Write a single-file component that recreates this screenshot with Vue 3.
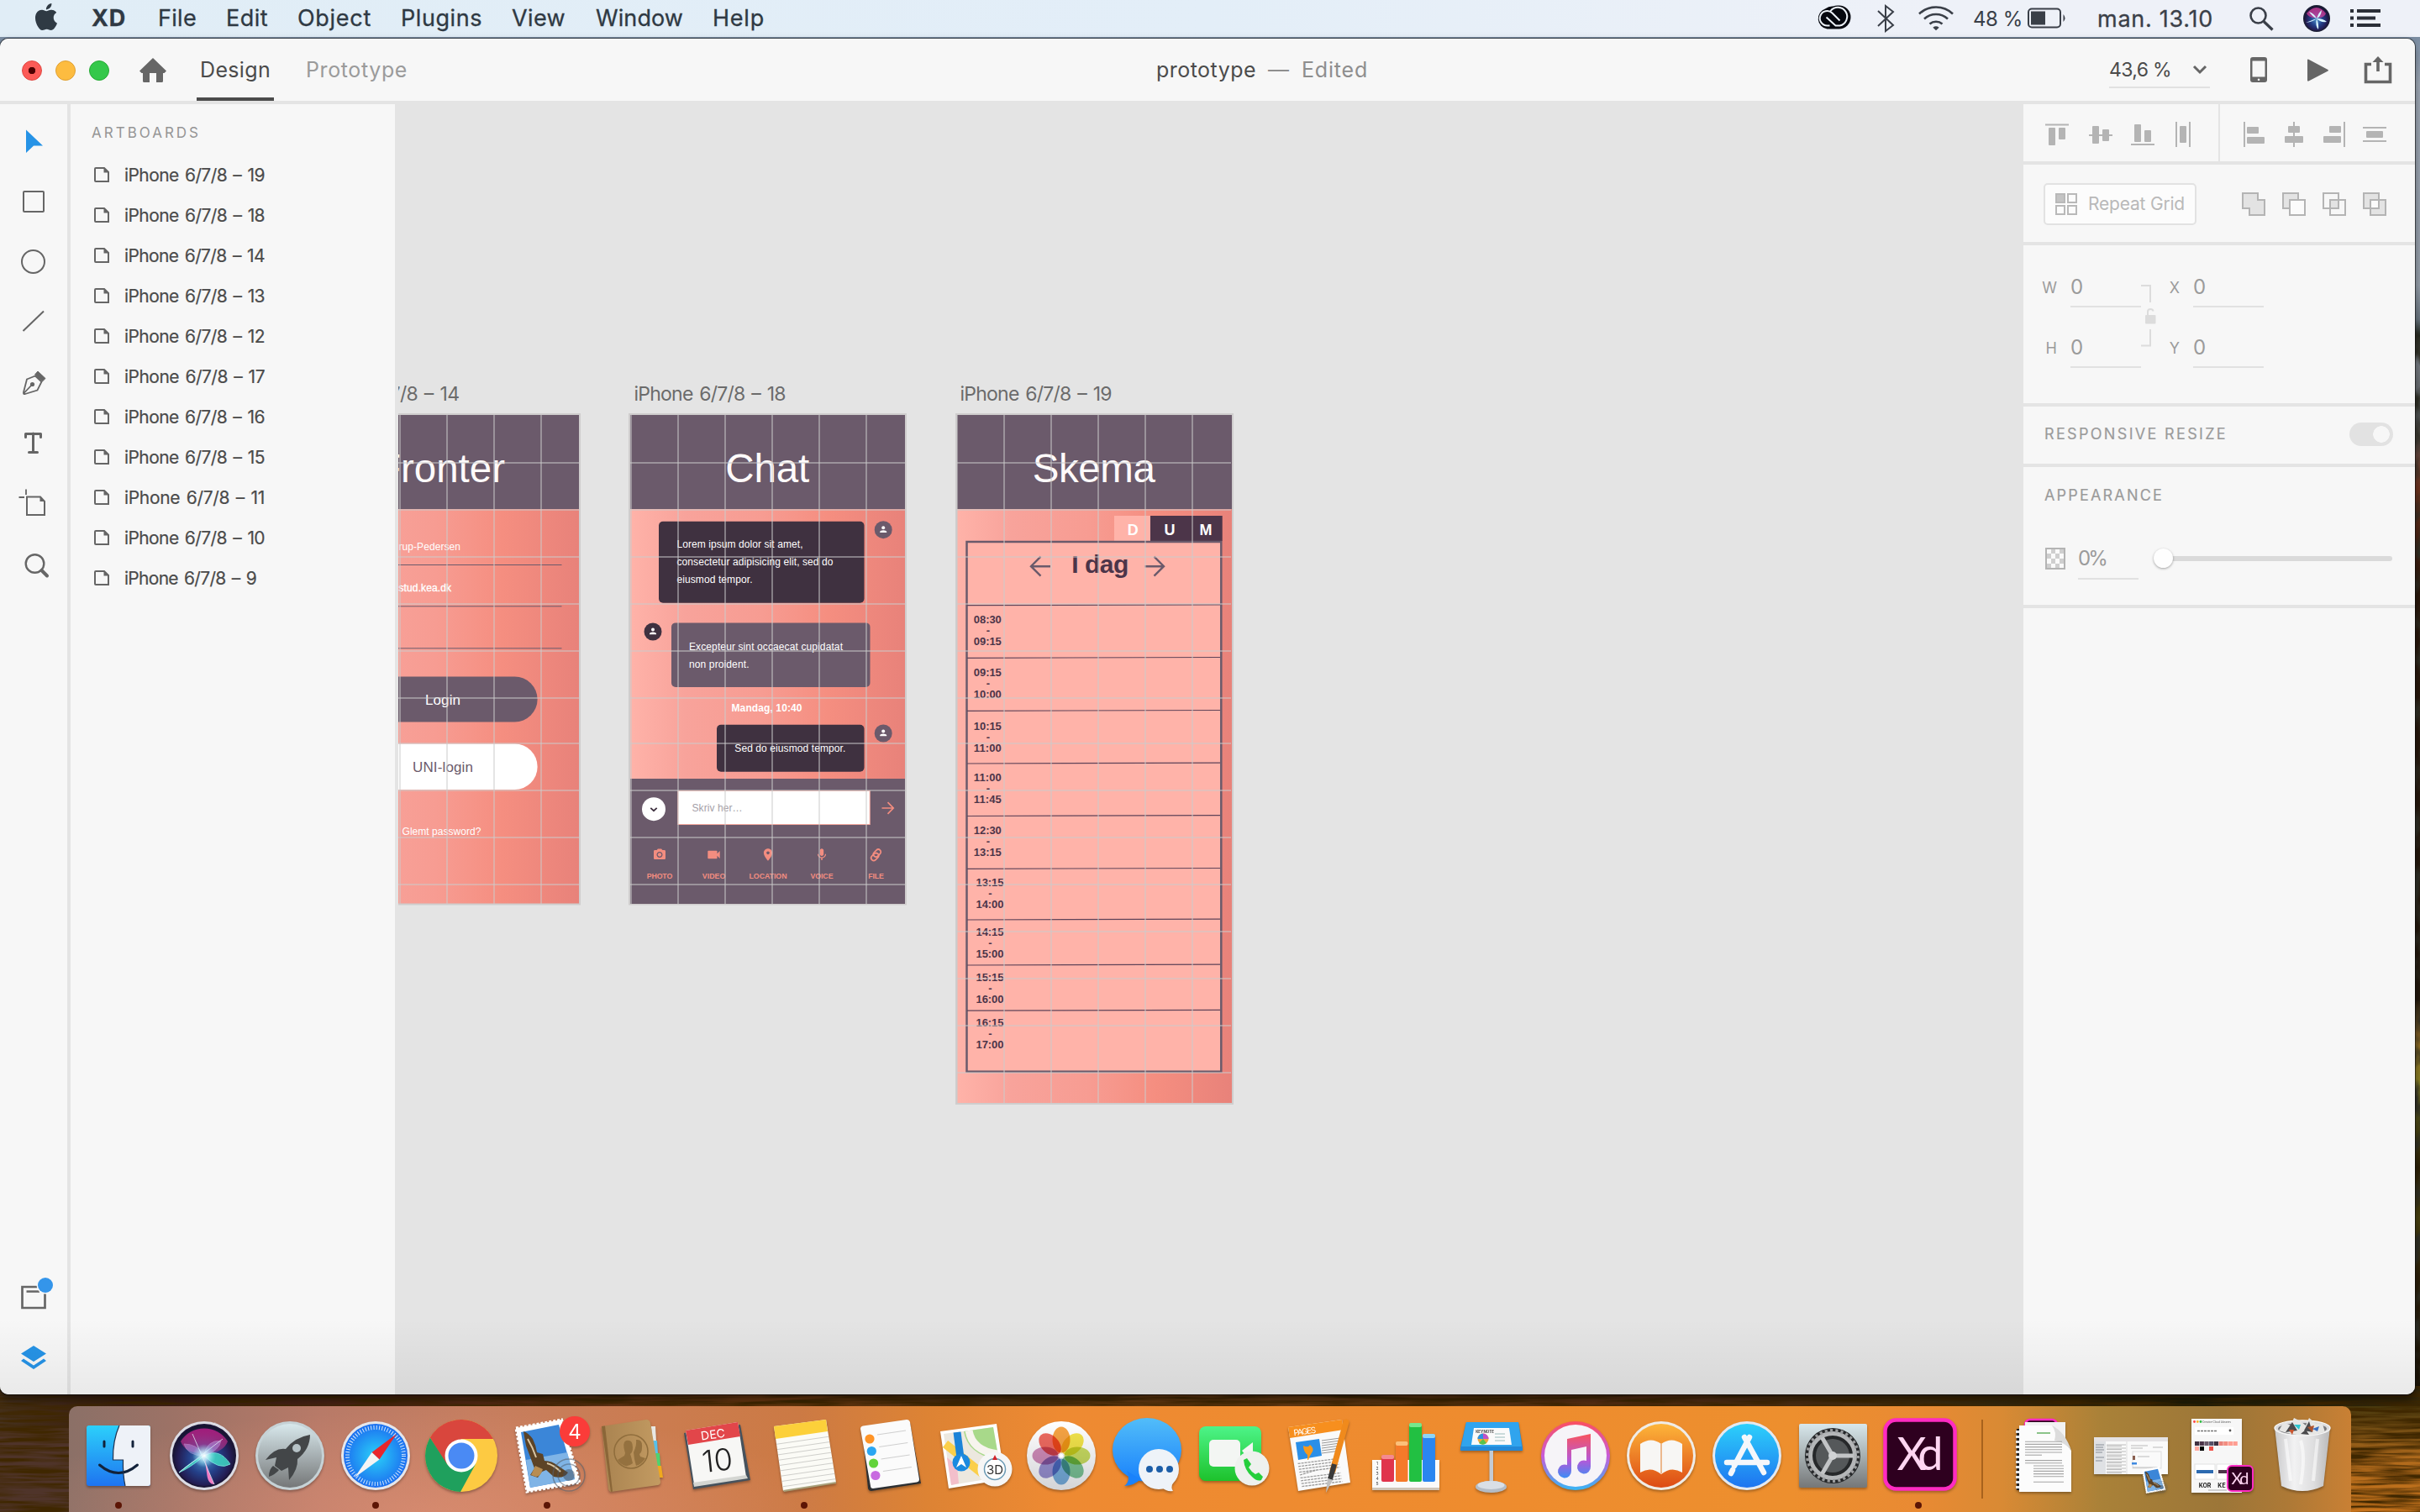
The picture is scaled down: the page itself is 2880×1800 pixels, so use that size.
<script setup>
// Adjusts tracking so a label occupies its designed width.
const vFit = {
  mounted(el, { value }) {
    const natural = el.getBoundingClientRect().width
    const count = el.textContent.length
    el.style.letterSpacing = ((value - natural) / count).toFixed(3) + 'px'
  },
}

const menus = [
  { label: 'XD', slot: 79, fit: 41, bold: true },
  { label: 'File', slot: 81, fit: 46 },
  { label: 'Edit', slot: 85, fit: 50 },
  { label: 'Object', slot: 123, fit: 88 },
  { label: 'Plugins', slot: 132, fit: 97 },
  { label: 'View', slot: 100, fit: 64 },
  { label: 'Window', slot: 139, fit: 104 },
  { label: 'Help', slot: 80, fit: 62 },
]

const layers = [19, 18, 14, 13, 12, 17, 16, 15, 11, 10, 9]

const columns = [0, 56, 112, 168, 224, 280]
const gridRows = [551, 607, 663, 719, 775, 831, 885, 941, 997, 1053, 1109, 1165, 1221, 1277]
const shortRows = gridRows.filter((y) => y < 1070)

const chatActions = [
  { label: 'PHOTO', x: 785, w: 30.5, s: 0.7, d: 'M9 2 7.17 4H4c-1.1 0-2 .9-2 2v12c0 1.1.9 2 2 2h16c1.1 0 2-.9 2-2V6c0-1.1-.9-2-2-2h-3.17L15 2H9zm3 15c-2.76 0-5-2.24-5-5s2.24-5 5-5 5 2.24 5 5-2.24 5-5 5zm0-8.200a3.200 3.200 0 1 0 .01 0z' },
  { label: 'VIDEO', x: 849.5, w: 27.5, s: 0.8, d: 'M17 10.500V7c0-.55-.45-1-1-1H4c-.55 0-1 .45-1 1v10c0 .55.45 1 1 1h12c.55 0 1-.45 1-1v-3.500l4 4v-11l-4 4z' },
  { label: 'LOCATION', x: 914, w: 45, s: 0.73, d: 'M12 2C8.130 2 5 5.130 5 9c0 5.250 7 13 7 13s7-7.750 7-13c0-3.870-3.130-7-7-7zm0 9.500c-1.380 0-2.500-1.120-2.500-2.500s1.120-2.500 2.500-2.500 2.500 1.120 2.500 2.500-1.120 2.500-2.500 2.500z' },
  { label: 'VOICE', x: 978, w: 27, s: 0.73, d: 'M12 14c1.660 0 3-1.340 3-3V5c0-1.660-1.340-3-3-3S9 3.340 9 5v6c0 1.660 1.340 3 3 3zm5.300-3c0 3-2.540 5.100-5.300 5.100S6.700 14 6.700 11H5c0 3.410 2.720 6.230 6 6.720V21h2v-3.280c3.280-.48 6-3.300 6-6.720h-1.700z' },
  { label: 'FILE', x: 1042.5, w: 18.5, s: 0.73, d: '' },
]

const lessons = [
  { y: 742, x: 1175.3, from: '08:30', to: '09:15' },
  { y: 805, x: 1175.3, from: '09:15', to: '10:00' },
  { y: 869, x: 1175.3, from: '10:15', to: '11:00' },
  { y: 930, x: 1175.3, from: '11:00', to: '11:45' },
  { y: 993, x: 1175.3, from: '12:30', to: '13:15' },
  { y: 1055, x: 1178, from: '13:15', to: '14:00' },
  { y: 1114, x: 1178, from: '14:15', to: '15:00' },
  { y: 1168, x: 1178, from: '15:15', to: '16:00' },
  { y: 1222, x: 1178, from: '16:15', to: '17:00' },
]
const rules = [720.7, 783.3, 846.3, 909, 971.5, 1034.3, 1095, 1149, 1203.2]

const apps = ['finder', 'siri', 'launchpad', 'safari', 'chrome', 'mail', 'contacts', 'calendar', 'notes', 'reminders', 'maps', 'photos', 'messages', 'facetime', 'pages', 'numbers', 'keynote', 'itunes', 'books', 'appstore', 'settings', 'xd']
const running = ['finder', 'safari', 'mail', 'notes', 'xd']
const stacks = ['docs', 'mailwin', 'xdwin', 'trash']

const petals = ['#f79a2e', '#f2e136', '#c3d84e', '#6fbf8c', '#6aa9dd', '#8f86cf', '#cc7fb2', '#ee5a4f']
const swatches = ['#3f3140', '#4c3549', '#6b5a6b', '#575067', '#3f3140', '#e8827a', '#f38d80', '#ff9d92', '#ff9d92']
const listDots = ['#ff9426', '#2ba6f2', '#63d33b', '#c86be0']
</script>

<template>
  <div class="desktop">
    <svg class="texture" width="2880" height="1800" aria-hidden="true">
      <defs>
        <filter id="grain" x="0" y="0" width="100%" height="100%">
          <feTurbulence type="fractalNoise" baseFrequency="0.012 0.22" numOctaves="3" seed="4" />
          <feColorMatrix values="0 0 0 0 0.05  0 0 0 0 0.02  0 0 0 0 0  2.6 0 0 0 -0.85" />
        </filter>
        <filter id="speck" x="0" y="0" width="100%" height="100%">
          <feTurbulence type="fractalNoise" baseFrequency="0.05 0.03" numOctaves="3" seed="9" />
          <feColorMatrix values="0 0 0 0 0.03  0 0 0 0 0.03  0 0 0 0 0.02  3 0 0 0 -1.2" />
        </filter>
        <linearGradient id="shore">
          <stop offset="0" stop-color="#45311f" /><stop offset=".05" stop-color="#3a1d14" />
          <stop offset=".15" stop-color="#4a2314" /><stop offset=".33" stop-color="#6e3a10" />
          <stop offset=".4" stop-color="#4c2f10" /><stop offset=".47" stop-color="#6a3c12" />
          <stop offset=".6" stop-color="#5c3410" /><stop offset=".68" stop-color="#5a2f16" />
          <stop offset=".8" stop-color="#3e2c0e" /><stop offset=".9" stop-color="#1f1c06" />
          <stop offset="1" stop-color="#33270a" />
        </linearGradient>
        <linearGradient id="pond" x2="0" y2="1">
          <stop offset="0" stop-color="#4a3a0e" /><stop offset=".5" stop-color="#b06a1c" /><stop offset="1" stop-color="#c8741c" />
        </linearGradient>
      </defs>
      <rect y="1650" width="2880" height="150" fill="url(#shore)" />
      <rect x="0" y="1700" width="84" height="100" fill="#4f342a" />
      <rect x="2790" y="1674" width="90" height="126" fill="url(#pond)" />
      <rect y="1650" width="2880" height="150" filter="url(#grain)" />
      <rect x="2868" y="380" width="12" height="1280" filter="url(#speck)" />
    </svg>

    <header class="menubar">
      <svg class="apple" width="32" height="32" viewBox="0 0 24 24"><path fill="#2f3a44" d="M12.152 6.896c-.948 0-2.415-1.078-3.960-1.040-2.040.027-3.910 1.183-4.961 3.014-2.117 3.675-.546 9.103 1.519 12.090 1.013 1.454 2.208 3.090 3.792 3.039 1.520-.065 2.090-.987 3.935-.987 1.831 0 2.350.987 3.960.948 1.637-.026 2.676-1.480 3.676-2.948 1.156-1.688 1.636-3.325 1.662-3.415-.039-.013-3.182-1.221-3.220-4.857-.026-3.040 2.480-4.494 2.597-4.559-1.429-2.090-3.623-2.324-4.390-2.376-2-.156-3.675 1.090-4.610 1.090zM15.530 3.830c.843-1.012 1.400-2.427 1.245-3.830-1.207.052-2.662.805-3.532 1.818-.78.896-1.454 2.338-1.273 3.714 1.338.104 2.715-.688 3.559-1.701" /></svg>
      <nav class="menus">
        <div v-for="m in menus" :key="m.label" class="menu" :class="{ bold: m.bold }" :style="{ width: m.slot + 'px' }">
          <span v-fit="m.fit">{{ m.label }}</span>
        </div>
      </nav>
      <svg class="tray" width="180" height="44" viewBox="2160 0 180 44">
        <g transform="translate(-1.500 0)">
          <path d="M2177 34.500a12.500 12.500 0 0 1-2-24.300 13 13 0 0 1 9-2.700 14 14 0 0 1 7-1 14 14 0 0 1 0 28z" fill="#06080f" />
          <path d="M2180 30.500h-3a8.700 8.700 0 1 1 6-15l9 9M2181 13a11 11 0 1 1 11 17.500h-5l-11-10" fill="none" stroke="#edf2f8" stroke-width="2" />
        </g>
        <path d="M2236 13l18 17-9 7V7l9 7-18 17" fill="none" stroke="#3a3f48" stroke-width="2" />
        <g fill="none" stroke="#3a3f48" stroke-width="2.600">
          <path d="M2285 16.500a29 29 0 0 1 40 0" /><path d="M2291 22.500a20.500 20.500 0 0 1 28 0" /><path d="M2297.500 28.500a11.500 11.500 0 0 1 15 0" />
        </g>
        <path d="M2301.300 32.700a6 6 0 0 1 7.400 0l-3.700 3.500z" fill="#3a3f48" />
      </svg>
      <span v-fit="59" class="percent">48 %</span>
      <svg class="battery" width="48" height="26" viewBox="0 0 48 26"><rect x="1" y="1.500" width="38" height="22" rx="4" fill="none" stroke="#3a3f48" stroke-width="2" /><rect x="4" y="4.500" width="17" height="16" fill="#3a3f48" /><path d="M42.500 8q4 4.500 0 9z" fill="#3a3f48" /></svg>
      <span v-fit="138" class="clock">man. 13.10</span>
      <svg class="right-tray" width="180" height="44" viewBox="2670 0 180 44">
        <circle cx="2688.500" cy="18.500" r="9" fill="none" stroke="#3a3f48" stroke-width="2.600" /><path d="M2695 25.500l10.500 10" stroke="#3a3f48" stroke-width="3.200" />
        <circle cx="2758" cy="22" r="16" fill="#1d2036" /><circle cx="2758" cy="22" r="14.500" fill="url(#siriG)" /><path d="M2746 16q12-14 23 0-2 6-11 5-9 1-12-5z" fill="#e0409c" opacity=".7" />
        <path d="M2745 27q9-1 13-5 3-8 6-10-1 8-6 10 8 0 12 4-8 1-12-4 3 8 2 13-4-4-2-13-6-3-9-8 6 2 9 8z" fill="#d8f6ff" />
        <g fill="#2b2f38"><rect x="2798" y="11" width="4" height="4" /><rect x="2798" y="19.500" width="4" height="4" /><rect x="2798" y="28" width="4" height="4" /><rect x="2806" y="11" width="28" height="4" /><rect x="2806" y="19.500" width="22" height="4" /><rect x="2806" y="28" width="28" height="4" /></g>
      </svg>
    </header>

    <main class="window">
      <div class="titlebar">
        <div class="lights"><i class="red"></i><i class="yellow"></i><i class="green"></i></div>
        <svg class="home" width="32" height="30" viewBox="0 0 32 30"><path fill="#666" d="M16 0 32 15.500 29.500 18H28v9.500a1.500 1.500 0 0 1-1.500 1.500H20v-11h-8v11H5.500A1.500 1.500 0 0 1 4 27.500V18H2.500L0 15.500z" /></svg>
        <div class="tab active"><span v-fit="84">Design</span></div>
        <div class="tab second-tab"><span v-fit="121">Prototype</span></div>
        <h1 class="doc-title"><span v-fit="119">prototype</span><span class="dash">—</span><span v-fit="79" class="edited">Edited</span></h1>
        <div class="zoom"><span v-fit="74">43,6 %</span><svg width="18" height="12" viewBox="0 0 18 12"><path d="M2 2l7 7 7-7" fill="none" stroke="#666" stroke-width="3" /></svg></div>
        <svg class="actions" width="180" height="40" viewBox="2670 64 180 40">
          <path fill="#666" fill-rule="evenodd" d="M2681 69h14a3 3 0 0 1 3 3v24a3 3 0 0 1-3 3h-14a3 3 0 0 1-3-3V72a3 3 0 0 1 3-3zm-.5 4.500v19h15v-19zM2688 94.500a1.300 1.300 0 1 0 .1 0z" />
          <path fill="#666" d="M2746 72.500q0-1.500 1.500-.7l23 12.200q1 .7 0 1.400l-23 12q-1.500.6-1.500-.7z" />
          <path d="M2822 77.500h-6.500v21h29v-21h-6.500M2830 86V72" fill="none" stroke="#666" stroke-width="3.600" /><path fill="#666" d="M2830 68l6.500 7h-13z" />
        </svg>
      </div>

      <div class="body">
        <aside class="tools">
          <svg width="80" height="1536" viewBox="0 124 80 1536">
            <path d="M31 154.500 51 173.500H40L31 182z" fill="#2693e6" />
            <g fill="none" stroke="#666" stroke-width="2">
              <rect x="28" y="228" width="24" height="24" rx="1" /><circle cx="39.500" cy="311.500" r="13.500" /><path d="M27.500 394 52 370.500" />
              <path d="M32 451.500 42 447.500 49.500 454.500 44.500 464.500 30 469Q27.500 469.500 28 467zM28.500 468 38 458" stroke-width="1.800" />
              <path d="M32 591.500h16l5 5.500v16H32z" /><path d="M31 582.500v6.500M22.500 592H29" stroke-width="1.800" />
              <circle cx="41.500" cy="671" r="10.800" stroke-width="2.400" /><path d="M49.500 679 56 685.500" stroke-width="4" stroke-linecap="round" />
            </g>
            <circle cx="38.500" cy="457.500" r="2.600" fill="#666" /><path d="M45 442 54 450.500 50.500 454 41.500 446z" fill="#666" stroke="#666" />
            <path d="M30.500 520.500v-4h18v4M39.500 516v22.500M34.500 538.500h10" fill="none" stroke="#666" stroke-width="3" stroke-linejoin="round" stroke-linecap="round" />
            <path d="M47.500 591.500v5.500h5.500z" fill="#666" />
            <path d="M44 1532H26.500v25H53.500v-17M31.500 1537.500H47" fill="none" stroke="#666" stroke-width="2.700" />
            <circle cx="54" cy="1530" r="10.500" fill="#f7f7f7" /><circle cx="54" cy="1530" r="9" fill="#3495ea" />
            <path d="M40 1602 55 1611.500 40 1621 25 1611.500zM28 1617.500l12 8 12-8 3 2.500-15 10-15-10z" fill="#2693e6" />
          </svg>
        </aside>

        <aside class="layers">
          <h2><span v-fit="130">ARTBOARDS</span></h2>
          <ul>
            <li v-for="n in layers" :key="n">
              <svg width="18" height="18" viewBox="0 0 18 18"><path d="M2 1h10l5 5v11H2q-1 0-1-1V2q0-1 1-1z" fill="none" stroke="#666" stroke-width="2" /><path d="M11.500 0v6.500H18z" fill="#666" /></svg>
              <span v-fit="n === 9 ? 157 : 167">iPhone 6/7/8 – {{ n }}</span>
            </li>
          </ul>
        </aside>

        <section class="canvas">
          <svg class="board" width="1934" height="1536" viewBox="474 124 1934 1536">
            <defs>
              <linearGradient id="coral">
                <stop offset="0" stop-color="#ffb3a9" /><stop offset=".2" stop-color="#f8a39b" /><stop offset=".48" stop-color="#f79c92" />
                <stop offset=".72" stop-color="#f58e80" /><stop offset="1" stop-color="#e8827a" />
              </linearGradient>
              <radialGradient id="siriG" cx=".5" cy=".55" r=".55"><stop offset="0" stop-color="#4a90c8" /><stop offset=".45" stop-color="#24418a" /><stop offset=".8" stop-color="#231c52" /><stop offset="1" stop-color="#14122a" /></radialGradient>
              <g id="person" fill="#fff"><circle cx="0" cy="-2.400" r="2" /><path d="M-4 3.300V2Q-3.500 .6 0 .5 3.500 .6 4 2v1.300z" /></g>
            </defs>

            <g class="label">
              <text x="547" y="477" text-anchor="end" textLength="183">iPhone 6/7/8 – 14</text>
              <text x="754.500" y="477" textLength="181">iPhone 6/7/8 – 18</text>
              <text x="1142.500" y="476.500" textLength="181">iPhone 6/7/8 – 19</text>
            </g>

            <!-- Login screen -->
            <g>
              <rect x="361" y="493" width="329" height="583.500" fill="url(#coral)" stroke="#cfcdcd" stroke-width="2" />
              <rect x="362" y="494" width="327" height="112" class="plum" />
              <text class="heading" x="601" y="573.500" text-anchor="end" textLength="153">Fronter</text>
              <text class="body-text" x="474.500" y="655" textLength="73.500">rup-Pedersen</text>
              <text class="body-text semi" x="474.500" y="704" textLength="62.500">stud.kea.dk</text>
              <path d="M383 672.500H668.500M383 721.800H668.500M383 771.800H668.500" stroke="#6b5a6b" />
              <rect x="412" y="805.500" width="227.600" height="54" rx="27" class="plum" />
              <text class="button-text" x="527" y="838.500" text-anchor="middle" textLength="42" fill="#fff">Login</text>
              <rect x="412" y="885.500" width="227.600" height="54.500" rx="27" fill="#fff" />
              <text class="button-text" x="527" y="919.300" text-anchor="middle" textLength="72" fill="#6b5a6b">UNI-login</text>
              <text class="body-text" x="478.500" y="994" textLength="94">Glemt password?</text>
              <path v-for="c in columns" :key="'a' + c" :d="`M${364 + c} 494V1076`" class="grid-line" />
              <path v-for="r in shortRows" :key="'ar' + r" :d="`M362 ${r}H689`" class="grid-line" />
            </g>

            <!-- Chat screen -->
            <g>
              <rect x="749" y="493" width="329" height="583.500" fill="url(#coral)" stroke="#cfcdcd" stroke-width="2" />
              <rect x="750" y="494" width="327" height="112" class="plum" />
              <text class="heading" x="913.300" y="573.500" text-anchor="middle" textLength="100">Chat</text>
              <rect x="784" y="620.700" width="244.500" height="97" rx="5" class="ink" />
              <text class="body-text" x="805.500" y="652.300" textLength="150">Lorem ipsum dolor sit amet,</text>
              <text class="body-text" x="805.500" y="673.300" textLength="186">consectetur adipisicing elit, sed do</text>
              <text class="body-text" x="805.500" y="694.200" textLength="90">eiusmod tempor.</text>
              <circle cx="1051.200" cy="630.700" r="10.500" class="plum" /><use href="#person" x="1051.200" y="630.700" />
              <circle cx="777" cy="752" r="10.500" class="ink" /><use href="#person" x="777" y="752" />
              <rect x="799" y="741.400" width="236.500" height="76.600" rx="5" class="plum" />
              <text class="body-text" x="820" y="774" textLength="183">Excepteur sint occaecat cupidatat</text>
              <text class="body-text" x="820" y="795" textLength="71.500">non proident.</text>
              <text class="body-text strong" x="870.500" y="847" textLength="84">Mandag, 10:40</text>
              <rect x="853" y="862.700" width="175.500" height="56" rx="5" class="ink" />
              <text class="body-text" x="874.300" y="895" textLength="132">Sed do eiusmod tempor.</text>
              <circle cx="1051.200" cy="873" r="10.500" class="plum" /><use href="#person" x="1051.200" y="873" />
              <rect x="750" y="927" width="327" height="149" class="plum" />
              <circle cx="778" cy="963.200" r="14" fill="#fff" /><path d="M774.300 961.800l3.700 3.400 3.700-3.400" fill="none" stroke="#3f3140" stroke-width="1.800" />
              <rect x="806.800" y="941.500" width="228.400" height="40" fill="#fff" stroke="#f3a79d" stroke-width="1" />
              <text class="body-text hint" x="823.500" y="966.200" textLength="60">Skriv her…</text>
              <path d="M1049.500 962H1063M1056.500 955.200l6.700 6.800-6.700 6.800" fill="none" stroke="#f38d80" stroke-width="1.700" />
              <g v-for="a in chatActions" :key="a.label" fill="#f38d80">
                <path v-if="a.d" :d="a.d" fill-rule="evenodd" :transform="`translate(${a.x - 12 * a.s} ${1017.5 - 12 * a.s}) scale(${a.s})`" />
                <g v-else fill="none" stroke="#f38d80" stroke-width="1.700" transform="translate(1042.500 1017.800) rotate(-45)">
                  <rect x="-7.500" y="-2.500" width="10" height="6.200" rx="3.100" /><rect x="-2.500" y="-3.700" width="10" height="6.200" rx="3.100" />
                </g>
                <text class="tiny" :x="a.x" y="1046.200" text-anchor="middle" :textLength="a.w">{{ a.label }}</text>
              </g>
              <path v-for="c in columns" :key="'b' + c" :d="`M${751 + c} 494V1076`" class="grid-line" />
              <path v-for="r in shortRows" :key="'br' + r" :d="`M750 ${r}H1077`" class="grid-line" />
            </g>

            <!-- Timetable screen -->
            <g>
              <rect x="1138" y="493" width="329" height="821" fill="url(#coral)" stroke="#cfcdcd" stroke-width="2" />
              <rect x="1139" y="494" width="327" height="112" class="plum" />
              <text class="heading" x="1301.800" y="574" text-anchor="middle" textLength="146">Skema</text>
              <rect x="1326" y="614" width="43" height="30" fill="#ffb3a9" /><rect x="1369" y="614" width="85.700" height="30" fill="#4c3549" />
              <g class="day"><text x="1348.300" y="637.200">D</text><text x="1392" y="637.200">U</text><text x="1435" y="637.200">M</text></g>
              <rect x="1150.500" y="645" width="302.800" height="630.700" fill="#ffb3a9" stroke="#6b5a6b" stroke-width="2.500" />
              <g fill="none" stroke="#6b5a6b" stroke-width="2.400"><path d="M1250 674.200H1227.500M1238.500 662.700l-11.500 11.500 11.500 11.500" /><path d="M1362.500 674.200H1385M1373.500 662.700l11.500 11.500-11.500 11.500" /></g>
              <text x="1309.300" y="681.500" text-anchor="middle" textLength="68" class="today">I dag</text>
              <path v-for="y in rules" :key="y" :d="`M1151 ${y}L1452 ${y - 0.8}`" stroke="#5e4358" stroke-width="1.200" />
              <g v-for="l in lessons" :key="l.y" class="time">
                <text :x="l.x" :y="l.y" textLength="33">{{ l.from }}</text>
                <text :x="l.x + 0.5" :y="l.y + 13">-</text>
                <text :x="l.x" :y="l.y + 26" textLength="33">{{ l.to }}</text>
              </g>
              <path v-for="c in columns" :key="'c' + c" :d="`M${1139 + c} 494V1313`" class="grid-line" />
              <path v-for="r in gridRows" :key="'cr' + r" :d="`M1138 ${r}H1465`" class="grid-line" />
            </g>
          </svg>
        </section>

        <aside class="inspector">
          <div class="align-row">
            <svg width="232" height="68" viewBox="2408 124 232 68" fill="#b4b4b4">
              <rect x="2434" y="147.500" width="28" height="2" /><rect x="2438" y="152" width="8" height="21" rx="1" /><rect x="2450" y="152" width="8" height="14" rx="1" />
              <rect x="2486" y="160" width="28" height="2" /><rect x="2490" y="150" width="8" height="21" rx="1" /><rect x="2502" y="154" width="8" height="14" rx="1" />
              <rect x="2536" y="171" width="28" height="2" /><rect x="2540" y="148" width="8" height="21" rx="1" /><rect x="2552" y="155" width="8" height="14" rx="1" />
              <rect x="2589" y="145" width="2" height="30" /><rect x="2605" y="145" width="2" height="30" /><rect x="2594" y="150" width="8" height="20" rx="1" />
            </svg>
            <svg class="divided" width="232" height="68" viewBox="2642 124 232 68" fill="#b4b4b4">
              <rect x="2670" y="145" width="2" height="30" /><rect x="2674" y="151" width="14" height="8" rx="1" /><rect x="2674" y="163" width="21" height="8" rx="1" />
              <rect x="2729" y="145" width="2" height="30" /><rect x="2723" y="150" width="14" height="8" rx="1" /><rect x="2719" y="162" width="22" height="8" rx="1" />
              <rect x="2789" y="145" width="2" height="30" /><rect x="2772" y="150" width="14" height="8" rx="1" /><rect x="2765" y="162" width="21" height="8" rx="1" />
              <rect x="2812" y="151" width="28" height="2" /><rect x="2812" y="167" width="28" height="2" /><rect x="2816" y="156" width="20" height="8" rx="1" />
            </svg>
          </div>

          <div class="grid-row">
            <div class="repeat">
              <svg width="26" height="26" viewBox="0 0 26 26" fill="none" stroke="#b9b9b9" stroke-width="2"><rect x="1" y="1" width="10" height="10" fill="#c4c4c4" /><rect x="15" y="1" width="10" height="10" /><rect x="1" y="15" width="10" height="10" /><rect x="15" y="15" width="10" height="10" /></svg>
              <span v-fit="115">Repeat Grid</span>
            </div>
            <svg width="172" height="28" viewBox="0 0 172 28" fill="none" stroke="#b4b4b4" stroke-width="2">
              <path d="M1 1h18v8h8v18H9v-8H1z" fill="#e3e3e3" />
              <rect x="49" y="1" width="18" height="18" fill="#e3e3e3" /><rect x="57" y="9" width="18" height="18" fill="#fbfbfb" />
              <rect x="97" y="1" width="18" height="18" /><rect x="105" y="9" width="18" height="18" /><rect x="105" y="9" width="10" height="10" fill="#e3e3e3" />
              <rect x="145" y="1" width="18" height="18" fill="#e3e3e3" /><rect x="153" y="9" width="18" height="18" fill="#e3e3e3" /><rect x="153" y="9" width="10" height="10" fill="#fbfbfb" />
            </svg>
          </div>

          <div class="size-box">
            <div class="col">
              <label>W<span>0</span></label>
              <label>H<span>0</span></label>
            </div>
            <svg width="14" height="74" viewBox="2548 339 14 74" overflow="visible"><path d="M2548 340h11v20M2559 392v19.500h-11" fill="none" stroke="#dcdcdc" stroke-width="2" /><rect x="2553" y="375" width="12.500" height="10.500" rx="1" fill="#dcdcdc" /><path d="M2556 375v-4q0-3 3.200-3t3.200 2.500" fill="none" stroke="#dcdcdc" stroke-width="2" /></svg>
            <div class="col second">
              <label>X<span>0</span></label>
              <label>Y<span>0</span></label>
            </div>
          </div>

          <div class="resize-row"><span v-fit="218">RESPONSIVE RESIZE</span><i class="toggle"></i></div>

          <div class="appearance">
            <h3><span v-fit="142">APPEARANCE</span></h3>
            <div class="opacity">
              <svg width="24" height="26" viewBox="0 0 24 26"><rect x="1" y="1" width="22" height="24" fill="#fafafa" stroke="#b4b4b4" stroke-width="2" /><path d="M7 2h5v5H7zM17 2h5v5h-5zM2 7h5v6H2zM12 7h5v6h-5zM7 13h5v6H7zM17 13h5v6h-5zM2 19h5v5H2zM12 19h5v5h-5z" fill="#cfcfcf" /></svg>
              <div class="value"><span v-fit="33">0%</span></div>
              <div class="slider"><i></i></div>
            </div>
          </div>
          <div class="rest"></div>
        </aside>
      </div>
      <div class="shade"></div>
    </main>

    <footer class="dock">
      <svg class="defs" width="0" height="0">
        <defs>
          <linearGradient id="gBlue" x2="0" y2="1"><stop offset="0" stop-color="#2cd0fb" /><stop offset="1" stop-color="#1e74f0" /></linearGradient>
          <linearGradient id="gSky" x2="0" y2="1"><stop offset="0" stop-color="#52bdf9" /><stop offset="1" stop-color="#1a82fb" /></linearGradient>
          <linearGradient id="gGrey" x2="0" y2="1"><stop offset="0" stop-color="#d8e8ec" /><stop offset="1" stop-color="#757778" /></linearGradient>
          <linearGradient id="gWhite" x2="0" y2="1"><stop offset="0" stop-color="#fff" /><stop offset="1" stop-color="#d3d4d6" /></linearGradient>
          <linearGradient id="gOrange" x2="0" y2="1"><stop offset="0" stop-color="#fdb53a" /><stop offset="1" stop-color="#dd4a14" /></linearGradient>
          <linearGradient id="gGreen" x2="0" y2="1"><stop offset="0" stop-color="#4df488" /><stop offset="1" stop-color="#1dc22c" /></linearGradient>
          <linearGradient id="gTunes" x2="0" y2="1"><stop offset="0" stop-color="#fb5060" /><stop offset=".5" stop-color="#c85bd8" /><stop offset="1" stop-color="#36b6f4" /></linearGradient>
          <linearGradient id="gNote" x2="0" y2="1"><stop offset="0" stop-color="#f8545e" /><stop offset=".6" stop-color="#b558d8" /><stop offset="1" stop-color="#3d8df5" /></linearGradient>
          <linearGradient id="gTan"><stop offset="0" stop-color="#a98350" /><stop offset="1" stop-color="#c39b62" /></linearGradient>
          <radialGradient id="gSafari"><stop offset="0" stop-color="#2ad1f8" /><stop offset="1" stop-color="#1c6ff0" /></radialGradient>
          <linearGradient id="gMagenta" x2="0" y2="1"><stop offset="0" stop-color="#a01c7c" /><stop offset="1" stop-color="#ea3f9c" stop-opacity=".35" /></linearGradient>
          <radialGradient id="gGlow"><stop offset="0" stop-color="#fff" /><stop offset=".4" stop-color="#cdf6ff" stop-opacity=".7" /><stop offset="1" stop-color="#7fe0f0" stop-opacity="0" /></radialGradient>
          <linearGradient id="gCan"><stop offset="0" stop-color="#c9c9cb" /><stop offset=".35" stop-color="#f2f2f3" /><stop offset=".7" stop-color="#dededf" /><stop offset="1" stop-color="#b9b9ba" /></linearGradient>
          <g id="stamp">
            <path d="M-37-33 17.500-43 39 32-24 43z" fill="#fff" stroke="#fff" stroke-width="3" stroke-dasharray="3 2" />
            <path d="M-31-28 14-37 33 28-20 38z" fill="#3b86d8" /><path d="M-25 5 24-4 33 28-20 38z" fill="#7fb4e6" />
            <path d="M-28-29Q-22-27-17-20-13-12-12-4L-5-2-3 6Q6 6 13 12L25 20Q20 28 8 25L-1 17-6 19-11 26-20 23-15 15Q-19 4-25-12-27-22-28-29z" fill="#5c4326" /><path d="M-14 12l9 4q-3 9-8 9l-6-2z" fill="#b78d52" /><path d="M-23-20q6 10 10 22M0 9q8 2 16 10" stroke="#d9c6a4" stroke-width="2" fill="none" />
            <circle cx="26" cy="23" r="19" fill="none" stroke="#56606c" stroke-opacity=".6" stroke-width="1.500" /><circle cx="26" cy="23" r="13" fill="none" stroke="#4b5a6b" stroke-opacity=".5" stroke-width="1.500" /><circle cx="26" cy="23" r="7" fill="#3f4c5c" fill-opacity=".5" />
          </g>
        </defs>
      </svg>

      <div v-for="app in apps" :key="app" class="app">
        <svg width="102" height="102" viewBox="-51 -51 102 102">
          <g v-if="app === 'finder'">
            <rect x="-38" y="-36" width="76" height="72" rx="3" fill="url(#gBlue)" />
            <path d="M1-36H35a3 3 0 0 1 3 3V33a3 3 0 0 1-3 3H8Q5 22 5.500 5H-6.500Q-7-18 1-36z" fill="#eef2f8" />
            <path d="M-17-17v6M17-17v6M-22.500 11Q0 30 22.500 11" fill="none" stroke="#12223a" stroke-width="3" stroke-linecap="round" /><path d="M1-36Q-7-18-6.500 5H5.500Q5 22 8 36" fill="none" stroke="#1f3350" stroke-width="1.200" />
          </g>
          <g v-else-if="app === 'siri'">
            <circle r="41" fill="#dcdce4" /><circle r="38" fill="#1a1536" /><circle r="36" fill="url(#siriG)" />
            <path d="M-28-17A33 33 0 0 1 28-17Q22-2 0-3-22-2-28-17z" fill="url(#gMagenta)" />
            <path d="M0 0Q-14 6-30 20-16 14 0 0zM0 0Q18-10 31 10 18 18 0 0z" fill="#3fd8c4" opacity=".85" stroke="#7df0e4" stroke-width="1" />
            <path d="M0 0Q-20 0-24-14-8-14 0 0Q2-18 20-18 18-6 0 0z" fill="#b9a4f0" opacity=".45" stroke="#e0b8f4" stroke-width="1" /><path d="M0 0Q4 18 12 34 4 34 3 20z" fill="#f07cc4" /><path d="M-30 20 22-20M-14-26 12 34" stroke="#e8fbff" stroke-width="1" opacity=".7" /><circle r="14" fill="url(#gGlow)" />
          </g>
          <g v-else-if="app === 'launchpad'">
            <circle r="41" fill="#c6d2d6" /><circle r="38" fill="url(#gGrey)" />
            <path d="M24-25Q6-22-5-8Q-18-10-29 5L-16 2-18 12-10 18-2 14-1 29Q10 16 9 4 24-8 24-25z" fill="#434648" /><circle cx="8" cy="-9" r="5" fill="#b6c2c6" /><path d="M-20 12q-5 4-5 13 8-3 12-8z" fill="#434648" />
          </g>
          <g v-else-if="app === 'safari'">
            <circle r="41" fill="#e6e6ea" /><circle r="38" fill="url(#gSafari)" /><circle r="33.500" fill="none" stroke="#fff" stroke-opacity=".8" stroke-width="5" stroke-dasharray="1 2.300" />
            <path d="M25-26 4.500 4.500-4.500-4z" fill="#e8262c" /><path d="M-25 26-4.500-4 4.500 4.500z" fill="#f4f4f4" />
          </g>
          <g v-else-if="app === 'chrome'">
            <circle r="43" fill="#fdca42" /><path d="M-37.200-21.500A43 43 0 0 1 38-20H0L-18 10z" fill="#d9463d" /><path d="M-37.200-21.500-17 10 0 19 17 10-1 43A43 43 0 0 1-37.200-21.500z" fill="#1fa05d" />
            <circle r="19.500" fill="#fff" /><circle r="15.500" fill="#4a8af4" />
          </g>
          <g v-else-if="app === 'mail'">
            <use href="#stamp" /><circle cx="33" cy="-29" r="18" fill="#fb3c39" /><text x="33" y="-20.500" class="badge">4</text>
          </g>
          <g v-else-if="app === 'contacts'">
            <path d="M22-35h5l1 18h-5z" fill="#e8e8e4" /><path d="M24-18h5l1 16h-5z" fill="#57c0ea" /><path d="M27-3h5l1 15h-5z" fill="#4fd26e" /><path d="M29 12h5l2 14h-5z" fill="#f0a91e" />
            <path d="M-37-35 16-43Q20-43 21-39L33 31Q33 34 30 35L-26 43Q-28 43-29 40z" fill="url(#gTan)" /><path d="M-37-35l4-.6L-24 42.500l-2 .5z" fill="#8a6638" />
            <circle cx="-2" cy="-5" r="20" fill="none" stroke="#8f6d3c" stroke-width="1.500" /><path d="M-8-18q8-2 8 8 0 6-3 8l1 3 2 8q-5 4-9 3-6-2-9-7l8-5 1-3q-4-13 1-15z" fill="#94713f" /><path d="M4-19q8-1 7 9 0 6-3 8l1 3 6 2q-4 7-11 9l-2-8-1-8q4-9 3-15z" fill="#94713f" />
          </g>
          <g v-else-if="app === 'calendar'">
            <path d="M-41-27 26-37 38 29-30 40z" fill="#46525d" /><path d="M-39-30 23-40 33 25-29 34z" fill="#f7f7f5" /><path d="M-39-30 23-40 26-23-36-13z" fill="#e2464a" /><path d="M-30 32 33 23 35 27-29 37z" fill="#d4d6d2" />
            <text x="-3" y="-21" class="cal-month" transform="rotate(-8)">DEC</text><text x="-2" y="18" class="cal-day" transform="rotate(-6)">10</text>
          </g>
          <g v-else-if="app === 'notes'">
            <path d="M-36-35 26-43 38 32-25 42z" fill="#fbfbf6" /><path d="M-36-35 26-43 28-29-34-20z" fill="#fcd03a" /><path d="M-25 41 38 31v2L-24 43z" fill="#a8a07a" />
            <path v-for="i in 9" :key="i" :d="`M${-34 + i} ${-20 + i * 6.3}L${28 + i} ${-29 + i * 6.3}`" stroke="#cfcfcb" stroke-width="1" />
          </g>
          <g v-else-if="app === 'reminders'">
            <path d="M-33-30 24-39 37 33-22 42q-3 0-4-3z" fill="#2d3033" /><path d="M-35-32q0-3 3-3.500L20-43q3 0 4 3L35 28q0 3-3 3.500L-20 39q-3 0-3-3z" fill="#fbfbfb" />
            <template v-for="(c, i) in listDots" :key="c"><circle :cx="-24 + i * 2.300" :cy="-20 + i * 14.500" r="5.600" :fill="c" /><path :d="`M${-15 + i * 2.300} ${-28 + i * 14.500 + 3}l34-5`" stroke="#cfcfcf" /></template>
          </g>
          <g v-else-if="app === 'maps'">
            <path d="M-42-29 25-38 35 28-32 39z" fill="#fff" /><path d="M-38-26 21-34 31 25-29 35z" fill="#ece8df" /><path d="M-14-29 21-34 28 6Q-10-2-14-29z" fill="#a8d98a" /><path d="M-8-30Q-4-6 26-2" fill="none" stroke="#f7f4ee" stroke-width="9" /><path d="M-36-14 14 26" stroke="#fbcf4a" stroke-width="10" /><path d="M-34 2-22 12-20 33-29 35z" fill="#f3bfcb" /><path d="M-22-28-17 10" stroke="#1b83d8" stroke-width="9" />
            <circle cx="-17" cy="8" r="10.500" fill="#1b8ae0" /><path d="M-17 0l6 14-6-4-6 4z" fill="#fff" />
            <circle cx="23" cy="16" r="20.500" fill="#f6f6f6" /><circle cx="23" cy="16" r="12.500" fill="#fff" stroke="#6b9ab4" stroke-width="1.500" /><path d="M23-1l3 6h-6z" fill="#d3232b" /><text x="23" y="21.500" class="three-d">3D</text>
          </g>
          <g v-else-if="app === 'photos'">
            <circle r="41" fill="url(#gWhite)" /><ellipse v-for="(c, i) in petals" :key="c" cx="0" cy="-19" rx="10.500" ry="15.500" :fill="c" opacity=".9" :transform="`rotate(${i * 45})`" class="petal" /><circle r="2" fill="#fff" />
          </g>
          <g v-else-if="app === 'messages'">
            <ellipse cx="0" cy="-7" rx="41" ry="38" fill="url(#gSky)" /><path d="M-24 18Q-19 30-27 36-14 35-8 28z" fill="#1a82fb" /><circle cx="14" cy="16" r="24" fill="#eef3f8" /><path d="M18 38q10-2 13-6-3 6 0 10-8 1-13-4z" fill="#eef3f8" />
            <circle cx="3" cy="16" r="4" fill="#1c5ea8" /><circle cx="15" cy="16" r="4" fill="#1c5ea8" /><circle cx="27" cy="16" r="4" fill="#1c5ea8" />
          </g>
          <g v-else-if="app === 'facetime'">
            <rect x="-40" y="-35" width="74" height="65" rx="8" fill="url(#gGreen)" /><rect x="-28" y="-19" width="37" height="32" rx="5" fill="#f3f6f3" /><path d="M11-6 24-16V10z" fill="#f3f6f3" />
            <circle cx="23" cy="15" r="20.500" fill="#eef1ee" /><path d="M13 5l4-2 5 7-3 4q3 5 8 8l4-2 5 5-2 4q-5 2-11-4-9-8-10-20z" fill="#25cf3c" />
          </g>
          <g v-else-if="app === 'pages'">
            <path d="M-36-34 28-43 38 32-24 42z" fill="#fafafa" /><path d="M-36-34 28-43 30-31-34-21z" fill="#f78f1e" /><text x="-12" y="-27.500" class="pages" textLength="27" transform="rotate(-8)">PAGES</text>
            <path d="M-27-16 1-20 4 0-24 5z" fill="#2a8fe8" /><path d="M-18-12q6 3 8-1 5 4 3 8l-3 5-2 5h-1v-6q-5-4-5-11z" fill="#f79a1e" />
            <path v-for="i in 9" :key="i" :d="`M${-25 + i * 0.6} ${6 + i * 3.400}l${i === 5 ? 20 : 48}-6`" stroke="#9a9a9a" stroke-width="1.300" stroke-dasharray="3 1" /><path v-for="i in 6" :key="'s' + i" :d="`M4 ${-21 + i * 3}l22-3`" stroke="#9a9a9a" stroke-width="1.200" />
            <path d="M35-43 10 42 21 10z" fill="#d8d8d8" /><path d="M33-40 17 18" stroke="#f08a1c" stroke-width="7" stroke-linecap="round" /><path d="M19 10 14 28" stroke="#3a3a3a" stroke-width="6" /><path d="M11 27l6 2-8 15z" fill="#c0c0c0" />
          </g>
          <g v-else-if="app === 'numbers'">
            <rect x="-38" y="5" width="80" height="34" fill="#fafafa" /><path d="M-38 38h80v3h-80z" fill="#cfc5b8" />
            <rect x="-27" y="0" width="15" height="31" rx="2" fill="#e0344c" /><rect x="-10" y="-16" width="14.500" height="47" rx="2" fill="#f57a2a" /><rect x="6" y="-38" width="15" height="69" rx="2" fill="#22c042" /><rect x="22" y="-25" width="15" height="56" rx="2" fill="#2a86f0" />
            <rect x="-27" y="-1" width="15" height="5" rx="2" fill="#f58a90" /><rect x="-10" y="-17" width="14.500" height="5" rx="2" fill="#fbc07a" /><rect x="6" y="-39" width="15" height="5" rx="2" fill="#76e88c" /><rect x="22" y="-26" width="15" height="5" rx="2" fill="#8cd4f8" />
            <g class="ticks"><text x="-32" y="11">1</text><text x="-32" y="17">2</text><text x="-32" y="23">3</text><text x="-32" y="29">4</text><text x="-32" y="35">5</text></g>
          </g>
          <g v-else-if="app === 'keynote'">
            <rect x="-.5" y="-8" width="4.500" height="44" fill="#c4cbd4" /><ellipse cx="1.500" cy="37" rx="18.500" ry="7" fill="#b3bcc6" /><ellipse cx="1.500" cy="35" rx="16" ry="5" fill="#d9dfe6" />
            <path d="M-28-40H34L39-10V-6H-35V-10z" fill="#2389d8" /><path d="M-28-40H34L38-11H-34z" fill="#30a4ee" /><path d="M-19-33H23L26-13H-22z" fill="#fafafa" /><text x="-6" y="-27.500" class="keynote">KEYNOTE</text><circle cx="-8" cy="-20" r="6.500" fill="#f0a83c" /><path d="M-8-20v-6.500a6.500 6.500 0 0 1 6.500 6.500z" fill="#c052c8" /><path d="M-8-20h-6.500a6.500 6.500 0 0 1 6.500-6.500z" fill="#2d93e0" /><path d="M-8-20l-5 5a6.500 6.500 0 0 0 9 0z" fill="#58c24c" /><path d="M6-26h12M6-22h12M6-18h12" stroke="#9bb" stroke-width="1.200" />
          </g>
          <g v-else-if="app === 'itunes'">
            <circle r="41" fill="url(#gTunes)" /><circle r="37" fill="#f6f4f8" /><path d="M-10-20 18-26V13a8 8 0 1 1-5-7V-11L-5-7V18a8 8 0 1 1-5-7z" fill="url(#gNote)" />
          </g>
          <g v-else-if="app === 'books'">
            <circle r="41" fill="#f0ece6" /><circle r="38" fill="url(#gOrange)" /><path d="M0-14Q-12-23-25-14V20Q-12 12 0 22 12 12 25 20V-14Q12-23 0-14z" fill="#f7f6f4" /><path d="M0-14V21" stroke="#e9a36c" stroke-width="1.500" />
          </g>
          <g v-else-if="app === 'appstore'">
            <circle r="41" fill="#e4e9f0" /><circle r="38" fill="url(#gBlue)" /><path d="M3-22-15 12M-3-22 20 20M-24 8H24M-17 17-19 21" stroke="#f4f7fb" stroke-width="6.500" stroke-linecap="round" />
          </g>
          <g v-else-if="app === 'settings'">
            <rect x="-40" y="-38" width="81" height="76" rx="2" fill="url(#gGrey)" /><circle r="33" fill="#26282a" /><circle r="26.500" fill="none" stroke="#b4b6b8" stroke-width="5" /><circle r="30" fill="none" stroke="#9a9c9e" stroke-width="4" stroke-dasharray="3.100 3.180" />
            <circle r="20" fill="#55585a" /><path d="M0 0 25 0M0 0-12.500-21.600M0 0-12.500 21.600" stroke="#c2c4c6" stroke-width="5" /><circle r="5" fill="#d0d2d4" />
          </g>
          <g v-else>
            <rect x="-39.500" y="-42.500" width="83" height="82" rx="13" fill="#2e001f" stroke="#ff2bc2" stroke-width="4.500" /><text x="2" y="17" class="xd" textLength="55">Xd</text>
          </g>
        </svg>
        <i v-if="running.includes(app)" class="dot"></i>
      </div>

      <div class="divider"></div>

      <div v-for="s in stacks" :key="s" class="app">
        <svg width="102" height="102" viewBox="-51 -51 102 102">
          <g v-if="s === 'docs'">
            <rect x="-24" y="-43" width="38" height="20" rx="6" fill="#2e001f" stroke="#ff2bc2" stroke-width="2.500" /><rect x="-24" y="-40" width="48" height="20" fill="#f2f2f2" /><rect x="-34" y="-32" width="8" height="73" fill="#222" /><path d="M-33-30V40" stroke="#e8e8e8" stroke-width="4" stroke-dasharray="3 3" />
            <path d="M-31-36H8L31-6V43H-31z" fill="#fcfcfc" /><path d="M8-36Q14-28 11-18 24-16 31-6 24-28 8-36z" fill="#dcdcdc" /><path d="M-10-27h16" stroke="#8cc48a" stroke-width="2" />
            <path v-for="i in 16" :key="i" :d="`M${i > 9 ? -14 : -24} ${-20 + i * 3.200}h${i > 9 ? 36 : i === 6 ? 20 : 44}`" stroke="#a5a5a5" stroke-width="1.100" :opacity="i % 8 === 7 ? 0 : 1" />
          </g>
          <g v-else-if="s === 'mailwin'">
            <rect x="-44" y="-22" width="88" height="44" fill="#fafafa" /><rect x="-44" y="-22" width="88" height="5" fill="#e4e2e4" /><rect x="-44" y="-17" width="14" height="39" fill="#dfe1e4" /><path d="M-42-13h10M-42-10h9M-42-7h10M-42-4h8M-42 2h10M-42 6h8" stroke="#8a9098" stroke-width="1.200" />
            <path v-for="i in 9" :key="i" :d="`M-29 ${-17 + i * 4}h23M-29 ${-15.500 + i * 4}h18`" stroke="#b4b4b4" stroke-width=".9" /><path d="M-5-17V22" stroke="#ddd" /><path d="M0-12h20M0-9h14M26-10h12" stroke="#bbb" /><rect x="2" y="-5" width="34" height="20" fill="none" stroke="#ddd" /><rect x="2" y="0" width="3" height="5" fill="#8a5f50" /><path d="M8 1h14M2 14h30" stroke="#bbb" /><rect x="1" y="8" width="6" height="2.500" fill="#3f8ae0" />
            <use href="#stamp" transform="translate(27 29) scale(.36)" />
          </g>
          <g v-else-if="s === 'xdwin'">
            <rect x="-30" y="-44" width="60" height="88" fill="#f7f7f7" /><circle cx="-26.500" cy="-40.500" r="1.400" fill="#f44" /><circle cx="-22.700" cy="-40.500" r="1.400" fill="#f9b52c" /><circle cx="-19" cy="-40.500" r="1.400" fill="#2cb940" /><text x="0" y="-39" class="micro">Creative Cloud Libraries</text>
            <rect x="-26" y="-34" width="46" height="9" fill="#fff" /><path d="M-23-29.500h24" stroke="#777" stroke-width="1.500" stroke-dasharray="3 1" /><circle cx="16" cy="-30" r="1.400" fill="#555" /><rect v-for="(c, i) in swatches" :key="i" :x="-26 + i * 5.700" y="-17" width="5.200" height="5" :fill="c" />
            <rect x="-26" y="-11" width="5" height="5" fill="#ffaaa0" /><rect x="-20" y="-11" width="5" height="5" fill="#000" /><rect x="-9" y="-11" width="5" height="5" fill="#ee5048" />
            <rect x="-26" y="10" width="24" height="18" fill="#fff" stroke="#e2e2e2" /><rect x="0" y="10" width="24" height="18" fill="#fff" stroke="#e2e2e2" /><rect x="-24" y="17" width="20" height="4" fill="#2d6ab0" /><rect x="2" y="17" width="20" height="4" fill="#4c3549" /><text x="-14" y="38" class="kor">KOR</text><text x="6" y="38" class="kor">KE</text><path d="M-10 41h22" stroke="#aaa" />
            <rect x="13" y="12" width="30" height="30" rx="5" fill="#2e001f" stroke="#ff2bc2" stroke-width="2" /><text x="28" y="34" class="xd small" textLength="21">Xd</text>
          </g>
          <g v-else>
            <path d="M-33-34H33L25 36Q0 48-25 36z" fill="url(#gCan)" /><ellipse cx="0" cy="-33" rx="33" ry="9" fill="#dcdcdd" stroke="#f6f6f6" stroke-width="1.500" /><ellipse cx="0" cy="-32" rx="29" ry="7" fill="#77777a" />
            <path d="M-28-30-22-40-14-36-10-45-2-41 4-36 8-45 16-38 24-38 27-28Q0-20-28-30z" fill="#e6e6e4" /><path d="M-20-28-12-40-6-30zM2-30 8-41 12-28zM-2-26l6-5 4 6z" fill="#4a4a4c" /><path d="M-10-37h8l-2 6z" fill="#2cc5cf" /><path d="M6-34l6 6 2-8z" fill="#b0542e" /><path d="M-16-31l4 6 2-6z" fill="#c9552f" /><path d="M12-32l6 3 2-6z" fill="#3a6fc0" />
            <path d="M-20-20-14 30M18-20 13 30M-2-18Q4 0-2 34" stroke="#fff" stroke-opacity=".55" stroke-width="4" fill="none" />
          </g>
        </svg>
      </div>
    </footer>
  </div>
</template>

<style>
html,
body {
  margin: 0;
  background: #33200f;
}
</style>

<style scoped>
.desktop {
  position: relative;
  display: flex;
  flex-direction: column;
  width: 2880px;
  height: 1800px;
  overflow: hidden;
  font-family: Inter, 'Liberation Sans', sans-serif;
  background: linear-gradient(180deg, #4d6278 0, #8a9bb0 60px, #a2acba 100px, #99a3af 340px, #6c7883 380px, #20261c 400px, #7b8188 430px, #55585a 500px, #70341f 580px, #2a170b 700px, #22180d 1190px, #9a6c22 1230px, #8a8224 1290px, #5c5a18 1320px, #2b1f06 1390px, #4a4310 1450px, #2d200a 1520px, #181104 1660px);
}
.desktop svg { display: block; flex: none; }
.texture { position: absolute; left: 0; top: 0; }
span { display: inline-block; white-space: pre; }

.menubar {
  position: relative;
  display: flex;
  align-items: center;
  height: 44px;
  color: #2f3943;
  font-size: 27px;
  background: linear-gradient(90deg, #e0edf6, #e3eef8 50%, #eef1f8 80%);
}
.apple { margin: -4px 0 0 39px; }
.menus { display: flex; flex: none; margin-left: 38px; width: 2050px; }
.menu { flex: none; line-height: 44px; }
.menu span { -webkit-text-stroke: 0.3px #2f3943; }
.bold { font-weight: 700; }
.percent { font-size: 24px; margin-left: 9px; color: #3a3f48; }
.battery { margin-left: 6px; }
.clock { margin-left: 35px; color: #3a3f48; -webkit-text-stroke: 0.3px #3a3f48; }
.right-tray { margin-left: 35px; }

.window {
  position: relative;
  box-sizing: border-box;
  width: 2874px;
  height: 1614px;
  margin-top: 2px;
  border-radius: 10px;
  overflow: hidden;
  background: #e4e4e4;
  box-shadow: 0 0 0 1px rgba(0, 0, 0, 0.5), 0 6px 12px rgba(0, 0, 0, 0.5);
}
.titlebar { position: relative; display: flex; align-items: center; height: 74px; background: #f7f7f7; }
.lights { display: flex; gap: 16px; margin: 2px 0 0 26px; }
.lights i { box-sizing: border-box; width: 24px; height: 24px; border-radius: 50%; border: 1px solid #e0443e; background: #fc5b57; }
.lights .red { background: radial-gradient(circle, #4d0000 0 4px, #fc5b57 4.5px); }
.lights .yellow { background: #fdbc40; border-color: #dfa033; }
.lights .green { background: #34c84a; border-color: #27aa35; }
.home { margin: 2px 0 0 36px; }
.tab { box-sizing: border-box; height: 74px; margin-left: 36px; padding: 0 5px 0 4px; width: 92px; line-height: 74px; font-size: 25px; color: #9b9b9b; }
.second-tab { margin-left: 34px; }
.tab.active { color: #4b4b4b; border-bottom: 4px solid #4b4b4b; }
.doc-title { display: flex; margin: 0; position: absolute; left: 1376px; top: 0; line-height: 74px; font-size: 25px; font-weight: 400; color: #4b4b4b; }
.dash { width: 26px; margin: 0 14px; color: #8e8e8e; }
.edited { color: #8e8e8e; }
.zoom { display: flex; align-items: center; justify-content: space-between; box-sizing: border-box; width: 120px; height: 44px; padding: 2px 3px 0 0; margin: 0 40px 0 auto; border-bottom: 2px solid #e1e1e1; font-size: 23px; color: #4b4b4b; }
.actions { margin-right: 24px; }

.body { display: flex; height: 1536px; margin-top: 4px; }
.tools { width: 80px; background: #f7f7f7; }
.layers { width: 386px; margin-left: 4px; background: #f7f7f7; }
.layers h2 { margin: 20px 0 0 25px; font-size: 17px; line-height: 28px; font-weight: 400; color: #959595; }
.layers ul { list-style: none; margin: 12px 0 0; padding: 0; }
.layers li { display: flex; align-items: center; gap: 18px; height: 48px; padding-left: 28px; font-size: 21px; color: #4b4b4b; }
.layers li span { word-spacing: 2px; -webkit-text-stroke: 0.2px #4b4b4b; }
.canvas { width: 1934px; margin-left: 4px; overflow: hidden; }
.label text { font-size: 23px; fill: #6b6b6b; word-spacing: 2px; }
.board { font-family: 'Liberation Sans', Arial, sans-serif; }
.label { font-family: Inter, sans-serif; }
.plum { fill: #6b5a6b; }
.ink { fill: #3f3140; }
.grid-line { stroke: #cccccc; stroke-opacity: 0.5; stroke-width: 2; }
.heading { font-size: 47.5px; fill: #fffafa; }
.body-text { font-size: 12px; fill: #fff; }
.hint { fill: #a59fa8; }
.strong { font-weight: 700; }
.semi { stroke: #fff; stroke-width: 0.35px; }
.button-text { font-size: 17px; }
.tiny { font-size: 8.8px; font-weight: 700; }
.day text { font-size: 18px; font-weight: 700; fill: #fff; text-anchor: middle; }
.today { font-size: 30px; font-weight: 700; fill: #4c3549; }
.time text { font-size: 13px; font-weight: 700; fill: #4c3549; text-anchor: middle; }

.inspector { display: flex; flex-direction: column; gap: 4px; width: 466px; color: #9b9b9b; }
.inspector > div { background: #f7f7f7; box-sizing: border-box; }
.align-row { display: flex; height: 68px; }
.divided { border-left: 2px solid #e4e4e4; }
.grid-row { display: flex; align-items: center; justify-content: space-between; height: 92px; padding: 1px 34px 0 24px; }
.repeat { display: flex; align-items: center; gap: 13px; box-sizing: border-box; width: 182px; height: 50px; padding-left: 12px; border: 2px solid #e2e2e2; border-radius: 5px; background: #fcfcfc; font-size: 21px; color: #b9b9b9; }
.size-box { display: flex; height: 188px; padding: 38px 0 0 22px; }
.size-box svg { margin-top: 9px; }
.col label { display: flex; align-items: flex-start; justify-content: flex-end; box-sizing: border-box; width: 118px; height: 34px; margin-bottom: 38px; line-height: 26px; font-size: 18px; }
.col label span { width: 84px; margin-left: 16px; height: 34px; line-height: 24px; border-bottom: 2px solid #e1e1e1; font-size: 24px; }
.second { margin-left: 14px; }
.resize-row { display: flex; align-items: center; justify-content: space-between; height: 68px; padding: 0 26px 3px 25px; font-size: 18px; -webkit-text-stroke: 0.2px #9b9b9b; }
.toggle { width: 52px; height: 28px; border-radius: 14px; background: radial-gradient(circle at 38px 14px, #f7f7f7 9.5px, #e2e2e2 10px); }
.appearance { height: 164px; padding: 21px 24px 0 26px; font-size: 18px; }
.appearance h3 { margin: 0 0 0 -1px; font-size: 18px; font-weight: 400; line-height: 26px; -webkit-text-stroke: 0.2px #9b9b9b; }
.opacity { display: flex; align-items: center; margin-top: 38px; height: 48px; }
.value { width: 72px; height: 46px; margin: 2px 0 0 15px; line-height: 46px; font-size: 24px; border-bottom: 2px solid #e1e1e1; }
.slider { position: relative; width: 272px; height: 6px; margin-left: 30px; border-radius: 3px; background: #dadada; }
.slider i { position: absolute; left: -12px; top: -9px; width: 23px; height: 23px; border-radius: 50%; background: #fefefe; box-shadow: 0 1px 3px rgba(0, 0, 0, 0.35); }
.rest { flex: 1; }
.shade { position: absolute; left: 0; right: 0; bottom: 0; height: 90px; background: linear-gradient(180deg, rgba(0, 0, 0, 0), rgba(0, 0, 0, 0.055)); }

.dock {
  position: relative;
  display: flex;
  box-sizing: border-box;
  width: 2716px;
  height: 126px;
  margin: 14px 0 0 82px;
  padding: 8px 0 0 8px;
  border-radius: 10px 10px 0 0;
  background:
    radial-gradient(ellipse 500px 120px at 420px 126px, rgba(232, 150, 122, 0.5), rgba(232, 150, 122, 0)),
    linear-gradient(90deg, #8b7067 0, #9c7266 120px, #b87a68 300px, #c67e60 480px, #cb7c50 700px, #cc7a44 870px, #dd8334 1020px, #ee8a32 1180px, #ee8c2e 1700px, #ed8f2e 2050px, #e98a33 2200px, #d98a34 2300px, #a98138 2420px, #9c7638 2560px, #ad7936 2640px, #c98034 2716px);
}
.defs { position: absolute; }
.app { position: relative; width: 102px; flex: none; }
.app svg { overflow: visible; filter: drop-shadow(0 2px 1.500px rgba(0, 0, 0, 0.3)); }
.dot { position: absolute; left: 47px; bottom: 4px; width: 8px; height: 8px; border-radius: 50%; background: #5c1505; }
.divider { flex: none; width: 2px; height: 94px; margin: 8px 23px 0 24px; background: #a8621c; }
.app text { text-anchor: middle; font-family: Inter, sans-serif; }
.app .badge { font-size: 24px; fill: #fff; }
.app .cal-month { font-size: 14px; fill: #fff; }
.app .cal-day { font-size: 36px; font-weight: 300; fill: #222; }
.app .three-d { font-size: 15px; fill: #333; }
.app .pages { font-size: 10px; fill: #fff; }
.app .keynote { font-size: 4.5px; font-weight: 700; fill: #444; }
.app .ticks text { font-size: 5px; fill: #444; }
.app .xd { font-family: Lato, 'Open Sans', sans-serif; font-size: 54px; fill: #ffd6f2; }
.app .small { font-size: 20px; }
.app .micro { font-size: 3px; fill: #555; }
.app .kor { font-size: 7px; font-weight: 700; fill: #222; }
.petal { mix-blend-mode: multiply; }
</style>
